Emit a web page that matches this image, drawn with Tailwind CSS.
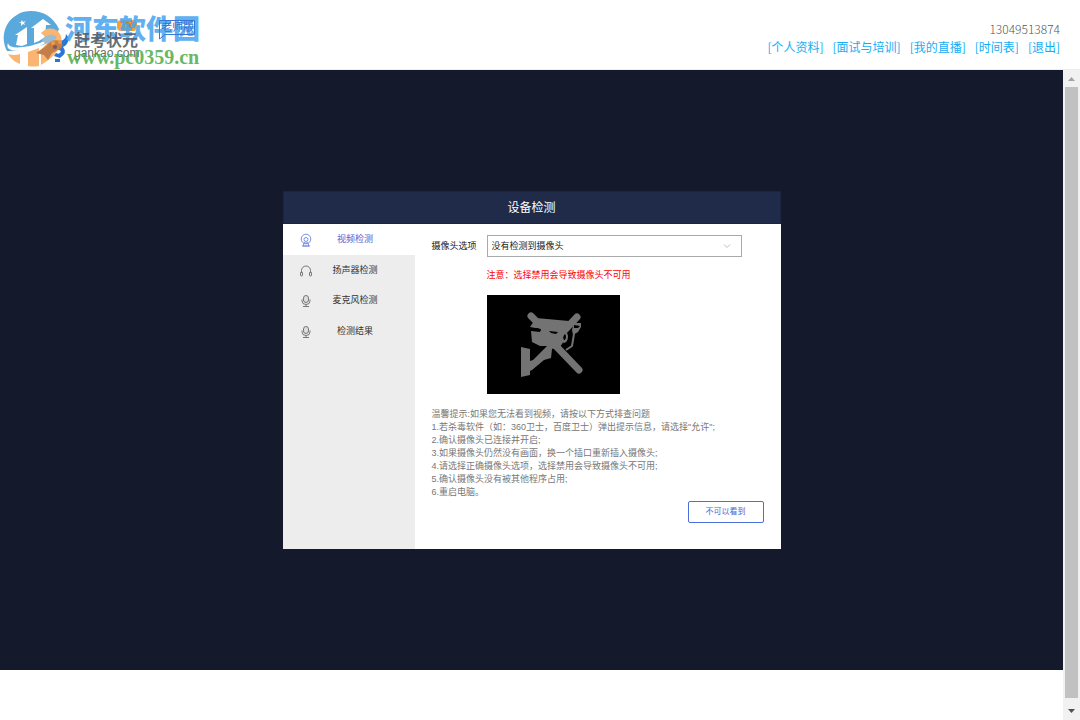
<!DOCTYPE html>
<html lang="zh-CN">
<head>
<meta charset="utf-8">
<title>设备检测</title>
<script src="https://cdn.jsdelivr.net/npm/@tailwindcss/browser@4"></script>
</head>
<body class="flex h-screen flex-col overflow-hidden bg-white font-['Liberation_Sans','Noto_Sans_CJK_SC',sans-serif]">
<header class="flex h-[70px] shrink-0 items-start justify-between border-b border-[#eeeeee] pr-5">
  <div class="relative h-full w-[220px]">
    <svg class="absolute left-0 top-0" width="80" height="70" viewBox="0 0 80 70" aria-hidden="true">
      <path d="M7 51A27 27 0 0 1 31 11Q50 11 59 29Q55 43 33 48Q18 51 7 51Z" fill="#5aa9dc"/>
      <path d="M8 54Q15 56 20 54V64Q12 61 8 54ZM28 52L39 48V66Q34 67 28 66Z" fill="#fbb573"/>
      <path d="M16 45L18 35H15L27 27V44L22 46Z" fill="#fff"/>
      <path d="M34 43V28H31L43 19L51 25H46L45 37L39 41Z" fill="#fff"/>
      <path d="M8 43Q4 53 26 50Q48 47 58 29Q49 42 30 46Q9 50 8 43Z" fill="#fff"/>
      <path d="M22 20l1 2 3-1-2 2 1 2-2-1-2 2 0-3-2-1 2 0z" fill="#fff"/>
      <path d="M41 33Q48 26 56 30Q63 35 61 43Q58 55 41 65V50L47 43Q48 39 41 33Z" fill="#fbb573"/>
      <path d="M42 40Q48 32 56 36Q58 39 50 43Q45 45 42 40Z" fill="#9bbdd0"/>
      <path d="M60 41Q66 40 66 34L69 38Q68 45 63 47Q68 53 60 58L54 56L56 53Q60 55 61 51L55 48ZM55 59h5v3h-5z" fill="#2876d8"/>
      <path d="M36 53L46 46Q52 38 60 41Q65 45 60 49L52 53L48 60L44 55Z" fill="#c67e49"/>
      <circle cx="53" cy="43" r="2" fill="#f59845"/><circle cx="60" cy="42" r="2" fill="#f59845"/><circle cx="55" cy="47" r="2" fill="#725a60"/>
    </svg>
    <span class="absolute left-[117px] top-[20px] h-[11px] w-[20px] rounded-sm bg-[#f8a12f] text-center text-[9px] font-bold leading-[11px] text-[#b77b37]">TM</span>
    <span class="absolute left-[65px] top-[14px] whitespace-nowrap text-[27px] font-black leading-[32px] text-[#4ba6ee]/90">河东软件园</span>
    <span class="absolute left-[74px] top-[32px] whitespace-nowrap text-[16px] font-bold leading-[18px] text-[#555b63]/90">赶考状元</span>
    <span class="absolute left-[74px] top-[46px] text-[12px] leading-[14px] text-[#626b68]">gankao.com</span>
    <span class="absolute left-[67px] top-[46px] font-['Liberation_Serif',serif] text-[20px] font-bold leading-[22px] text-[#4cab48]/85">www.pc0359.cn</span>
    <span class="absolute left-[161px] top-[21px] whitespace-nowrap text-[11px] leading-[13px] text-[#3571ce]">老师版</span>
    <svg class="absolute left-[158px] top-[19px]" width="39" height="22" viewBox="0 0 39 22" aria-hidden="true"><path d="M1.500 1.500H36.500V15.500H7L1.500 20Z" fill="none" stroke="#3978d5"/></svg>
  </div>
  <div class="flex flex-col items-end pt-[20px] text-[12px] leading-[18px]">
    <span class="font-['Noto_Sans_CJK_SC',sans-serif] font-light text-[#555555]">13049513874</span>
    <nav class="flex gap-[9px] whitespace-nowrap font-['Noto_Sans_CJK_SC',sans-serif] text-[#12aef5]">
      <a href="#">[个人资料]</a><a href="#">[面试与培训]</a><a href="#">[我的直播]</a><a href="#">[时间表]</a><a href="#">[退出]</a>
    </nav>
  </div>
</header>
<div class="flex min-h-0 flex-1">
  <main class="flex min-w-0 flex-1 flex-col">
    <div class="mb-[50px] flex flex-1 items-center justify-center bg-[#141a2c]">
      <section class="w-[498px] bg-white" aria-labelledby="title">
        <h1 id="title" class="border border-[#1a2641] bg-[#202b49] pt-[2px] text-center text-[12px] leading-[29px] text-white">设备检测</h1>
        <div class="flex min-h-[325px]">
          <nav class="w-[132px] shrink-0 bg-[#ededed] text-[9px] text-[#333333]">
            <a href="#" class="flex h-[31px] items-center bg-white pl-[16px] text-[#4368d4]">
              <svg width="14" height="14" viewBox="0 0 14 14" fill="none" stroke="#7890df" aria-hidden="true"><circle cx="7" cy="6" r="4.800"/><circle cx="7" cy="6.500" r="2"/><path d="M5.500 9L4 13H10L8.500 9M3 13H11M7 9v2"/></svg>
              <span class="mr-[17px] flex-1 text-center">视频检测</span>
            </a>
            <a href="#" class="flex h-[31px] items-center pl-[16px]">
              <svg width="14" height="14" viewBox="0 0 14 14" fill="none" stroke="#777777" aria-hidden="true"><path d="M2.500 9V6.500a4.500 4.500 0 0 1 9 0V9"/><rect x="1.500" y="8" width="2" height="4" rx="1"/><rect x="10.500" y="8" width="2" height="4" rx="1"/></svg>
              <span class="mr-[17px] flex-1 text-center">扬声器检测</span>
            </a>
            <a href="#" class="flex h-[30px] items-center pl-[16px]">
              <svg width="14" height="14" viewBox="0 0 14 14" fill="none" stroke="#777777" aria-hidden="true"><rect x="4.500" y="1.500" width="5" height="7" rx="2.500" fill="#dddddd"/><path d="M3 5.500v1.500a4 3.500 0 0 0 8 0V5.500M7 10.500v2M4 12.500h6"/></svg>
              <span class="mr-[17px] flex-1 text-center">麦克风检测</span>
            </a>
            <a href="#" class="flex h-[31px] items-center pl-[16px]">
              <svg width="14" height="14" viewBox="0 0 14 14" fill="none" stroke="#777777" aria-hidden="true"><rect x="4.500" y="1.500" width="5" height="7" rx="2.500" fill="#dddddd"/><path d="M3 5.500v1.500a4 3.500 0 0 0 8 0V5.500M7 10.500v2M4 12.500h6"/></svg>
              <span class="mr-[17px] flex-1 text-center">检测结果</span>
            </a>
          </nav>
          <div class="flex min-w-0 flex-1 flex-col px-[17px] pt-[11px] text-[9px]">
            <div class="flex items-center text-[#222222]">
              <label for="camera" class="w-[55px] shrink-0 pt-[2px]">摄像头选项</label>
              <div class="grid w-[255px] items-center">
                <select id="camera" class="col-start-1 row-start-1 h-[22px] appearance-none border border-[#aaaaaa] bg-white px-[4px] pt-[2px] text-[9px]"><option>没有检测到摄像头</option></select>
                <svg class="pointer-events-none col-start-1 row-start-1 mr-[11px] justify-self-end" width="8" height="6" viewBox="0 0 8 6" fill="none" stroke="#bbbbbb" aria-hidden="true"><path d="M1 1.500L4 4.500L7 1.500"/></svg>
              </div>
            </div>
            <p class="ml-[55px] mt-[12px] leading-[13px] text-[#ff0000]">注意：选择禁用会导致摄像头不可用</p>
            <svg class="ml-[55px] mt-[13px]" width="133" height="99" viewBox="0 0 133 99" role="img" aria-label="摄像头不可用">
              <rect width="133" height="99" fill="#000"/>
              <g fill="#737373">
                <path d="M43 32L49 23L82 26L86 28H94V32L91 37L86 40L85 35L86 31L82 30L79 37H74V49L65 54L64 63L57 65L45 75L43 76V80L34 82V52L43 54V66L46 65L60 51L53 51L45 47L44 36L53 37L54 34Z"/>
                <path d="M77 37Q80 36 81 41Q81 47 77 48Q74 47 74 42Q75 38 77 37Z"/>
                <path d="M87 39L85 51L79 55" fill="none" stroke="#737373" stroke-width="2"/>
                <path d="M44 21L49 26M68 50L92 75M90 22L75 38" fill="none" stroke="#737373" stroke-width="7" stroke-linecap="round"/>
                <path d="M72 37L77 38V46L71 55L62 52L66 40Z"/>
              </g>
              <path d="M44 33L51 33L54 36L45 35ZM62 36L71 37L69 39L64 38ZM78 39Q80 41 78 45L77 45Q75 42 78 39ZM87 30L93 31L91 33L87 33Z" fill="#000"/>
            </svg>
            <div class="mt-[14px] whitespace-nowrap leading-[13px] text-[#777777]">
              <p>温馨提示:如果您无法看到视频，请按以下方式排查问题</p>
              <ol>
                <li>1.若杀毒软件（如：360卫士，百度卫士）弹出提示信息，请选择"允许";</li>
                <li>2.确认摄像头已连接并开启;</li>
                <li>3.如果摄像头仍然没有画面，换一个插口重新插入摄像头;</li>
                <li>4.请选择正确摄像头选项，选择禁用会导致摄像头不可用;</li>
                <li>5.确认摄像头没有被其他程序占用;</li>
                <li>6.重启电脑。</li>
              </ol>
            </div>
            <button type="button" class="mt-[2px] h-[22px] w-[76px] self-end rounded-[2px] border border-[#4b70d8] text-[8px] text-[#4368d4]">不可以看到</button>
          </div>
        </div>
      </section>
    </div>
  </main>
  <div class="flex w-[17px] shrink-0 flex-col items-center bg-[#f1f1f1]" aria-hidden="true">
    <svg width="17" height="17" viewBox="0 0 17 17"><path d="M5 11H12L8.500 7Z" fill="#a3a3a3"/></svg>
    <div class="w-[13px] flex-1 bg-[#c1c1c1]"></div>
    <svg width="17" height="22" viewBox="0 0 17 22"><path d="M5 11H12L8.500 15Z" fill="#505050"/></svg>
  </div>
</div>
</body>
</html>
